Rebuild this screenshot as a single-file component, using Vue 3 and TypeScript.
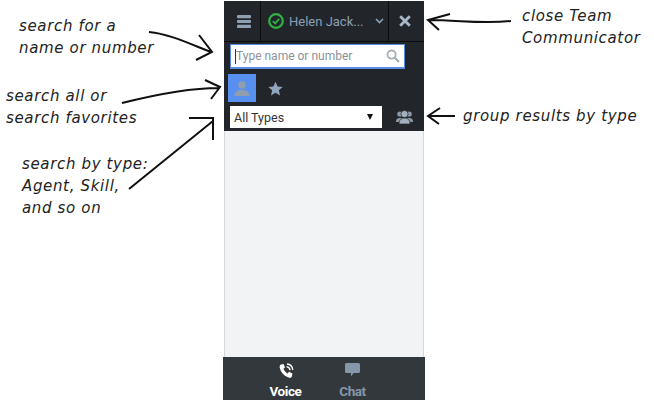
<script setup lang="ts">
// callouts around the Team Communicator panel
const notes = [
  { text: 'search for a\nname or number', x: 19, y: 15 },
  { text: 'search all or\nsearch favorites', x: 6, y: 85 },
  { text: 'search by type:\nAgent, Skill,\nand so on', x: 22, y: 153 },
  { text: 'close Team\nCommunicator', x: 522, y: 5 },
  { text: 'group results by type', x: 463, y: 105 },
]

const arrows = [
  'M149 32C170 34 190 44 211 52M196 60L212 52L199 35',
  'M122 103C150 96 185 88 219 88M205 80L220 87L211 99',
  'M129 189L213 121M189 118L213 118L213 140',
  'M511 21C480 24 460 20 428 20M450 14L428 20L439 30',
  'M455 116H428M440 108L428 116L439 124',
]
</script>

<template>
  <div class="page">
    <div class="panel">
      <header class="topbar">
        <button class="menu-btn">
          <svg width="14" height="13" viewBox="0 0 14 13">
            <rect y="0" width="14" height="3.2" rx="1" />
            <rect y="4.9" width="14" height="3.2" rx="1" />
            <rect y="9.8" width="14" height="3.2" rx="1" />
          </svg>
        </button>
        <div class="agent">
          <svg width="16" height="16" viewBox="0 0 16 16" class="status">
            <circle cx="8" cy="8" r="6.8" fill="none" stroke="#2fb344" stroke-width="2.2" />
            <path d="M4.8 8.2L7.2 10.4L11.2 5.8" fill="none" stroke="#2fb344" stroke-width="1.8" />
          </svg>
          <span class="agent-name">Helen Jack...</span>
          <svg width="9" height="6" viewBox="0 0 9 6" class="caret">
            <path d="M1 1L4.5 4.5L8 1" fill="none" stroke="#8aa0b8" stroke-width="1.6" />
          </svg>
        </div>
        <button class="close-btn">
          <svg width="12" height="12" viewBox="0 0 12 12">
            <path d="M1.2 1.2L10.8 10.8M10.8 1.2L1.2 10.8" stroke="#a9b8c8" stroke-width="2.8" />
          </svg>
        </button>
      </header>

      <div class="filters">
        <div class="search">
          <span class="cursor"></span>
          <span class="placeholder">Type name or number</span>
          <svg width="14" height="14" viewBox="0 0 14 14">
            <circle cx="5.6" cy="5.6" r="4.1" fill="none" stroke="#a6aeb6" stroke-width="1.8" />
            <path d="M8.6 8.6L13 13" stroke="#a6aeb6" stroke-width="2.2" />
          </svg>
        </div>

        <div class="scope">
          <div class="tile">
            <svg width="16" height="16" viewBox="0 0 16 16">
              <circle cx="8" cy="5" r="3.8" fill="#8f9dae" />
              <path d="M0.5 16C0.5 11.5 4 10 8 10C12 10 15.5 11.5 15.5 16Z" fill="#8f9dae" />
            </svg>
          </div>
          <svg class="star" width="15" height="15" viewBox="0 0 24 24">
            <path d="M12 1L15.4 8.6L23.5 9.4L17.4 14.9L19.2 23L12 18.8L4.8 23L6.6 14.9L0.5 9.4L8.6 8.6Z" fill="#8fa4bd" />
          </svg>
        </div>

        <div class="type-row">
          <div class="type-select">
            <span>All Types</span>
            <span class="arrow"></span>
          </div>
          <svg width="17" height="14" viewBox="0 0 17 14" class="group-icon">
            <circle cx="3.8" cy="4" r="2.6" fill="#8b98a6" />
            <circle cx="13.2" cy="4" r="2.6" fill="#8b98a6" />
            <path d="M0 12C0 8.5 2 8 4 8H13C15 8 17 8.5 17 12Z" fill="#8b98a6" />
            <circle cx="8.5" cy="4" r="3.6" fill="#a3afbc" stroke="#22262b" stroke-width=".7" />
            <path d="M3 14C3 9.5 5.5 8.2 8.5 8.2C11.5 8.2 14 9.5 14 14Z" fill="#a3afbc" stroke="#22262b" stroke-width=".7" />
          </svg>
        </div>
      </div>

      <main class="results"></main>

      <nav class="tabs">
        <div class="tab active">
          <svg width="16" height="16" viewBox="0 0 16 16">
            <path d="M3 1.5L5.6 1L7 4.4L5.4 5.8C6 7.6 7.6 9.4 9.6 10.4L11 8.8L14.4 10.4L14 13C13.8 14.4 12.6 15 11.2 14.7C6.6 13.6 2.6 9.4 1.7 4.6C1.4 3 2 2 3 1.5Z" fill="#fff" />
            <path d="M8.5 3.6C10.4 3.8 11.8 5.2 12 7.2M9 1C12 1.2 14.4 3.6 14.8 6.8" fill="none" stroke="#fff" stroke-width="1.4" />
          </svg>
          <span>Voice</span>
        </div>
        <div class="tab">
          <svg width="15" height="16" viewBox="0 0 15 16">
            <path d="M1.5 0H13.5A1.5 1.5 0 0 1 15 1.5V8.5A1.5 1.5 0 0 1 13.5 10H8.5L6 13.4V10H1.5A1.5 1.5 0 0 1 0 8.5V1.5A1.5 1.5 0 0 1 1.5 0Z" fill="#8598ab" />
          </svg>
          <span>Chat</span>
        </div>
      </nav>
    </div>

    <p v-for="n in notes" :key="n.text" class="note" :style="{ left: n.x + 'px', top: n.y + 'px' }">{{ n.text }}</p>

    <svg class="arrows" width="654" height="400" viewBox="0 0 654 400">
      <path v-for="d in arrows" :key="d" :d="d" fill="none" stroke="#111" stroke-width="2" />
    </svg>
  </div>
</template>

<style scoped>
.page {
  position: relative;
  width: 654px;
  height: 400px;
  overflow: hidden;
  background: #fff;
  font-family: Roboto, "Liberation Sans", sans-serif;
}

.panel {
  width: 202px;
  height: 400px;
  margin-left: 223px;
  display: flex;
  flex-direction: column;
}

.topbar {
  height: 40px;
  margin: 1px 1px 0;
  display: flex;
  background: #22262b;
  border-bottom: 1px solid #0b0c0e;
}

.menu-btn,
.close-btn {
  padding: 0;
  border: none;
  background: none;
  display: flex;
  align-items: center;
  justify-content: center;
}

.menu-btn {
  width: 37px;
  padding-left: 4px;
  border-right: 1px solid #0b0c0e;
}

.menu-btn svg {
  fill: #8e9fb2;
}

.close-btn {
  flex: 1;
  padding-right: 4px;
  border-left: 1px solid #0b0c0e;
}

.agent {
  width: 127px;
  display: flex;
  align-items: center;
  padding-left: 7px;
  box-sizing: border-box;
}

.status {
  flex: none;
}

.agent-name {
  margin-left: 5px;
  font-size: 13px;
  color: #8c9fb3;
  white-space: nowrap;
}

.caret {
  margin-left: auto;
  margin-right: 4px;
}

.filters {
  height: 89px;
  margin: 0 1px;
  padding: 2px 0 0 6px;
  box-sizing: border-box;
  background: #22262b;
}

.search {
  width: 175px;
  height: 25px;
  box-sizing: border-box;
  padding: 0 4px;
  display: flex;
  align-items: center;
  background: #fff;
  border: 1px solid #5a8de0;
  border-width: 1px 1px 2px;
}

.cursor {
  width: 1px;
  height: 15px;
  background: #333;
}

.placeholder {
  flex: 1;
  font-size: 12px;
  color: #8b929a;
}

.scope {
  margin: 5px 0 0 -2px;
  display: flex;
  align-items: center;
}

.tile {
  width: 28px;
  height: 28px;
  background: #5890f0;
  display: flex;
  align-items: center;
  justify-content: center;
}

.star {
  margin-left: 12px;
}

.type-row {
  margin-top: 4px;
  display: flex;
  align-items: center;
}

.type-select {
  width: 152px;
  height: 22px;
  box-sizing: border-box;
  padding: 0 9px 0 4px;
  display: flex;
  align-items: center;
  justify-content: space-between;
  background: #fff;
  font-size: 12.5px;
  color: #333;
}

.arrow {
  width: 0;
  height: 0;
  border-left: 3px solid transparent;
  border-right: 3px solid transparent;
  border-top: 6px solid #111;
}

.group-icon {
  margin-left: 14px;
}

.results {
  flex: 1;
  margin: 0 1px;
  background: #f2f3f5;
  border-left: 1px solid #d5d7da;
  border-right: 1px solid #d5d7da;
}

.tabs {
  height: 43px;
  display: flex;
  background: #33383c;
  padding-left: 29px;
}

.tab {
  width: 67px;
  display: flex;
  flex-direction: column;
  align-items: center;
  padding-top: 6px;
  box-sizing: border-box;
  gap: 4px;
  font-size: 13.5px;
  font-weight: 700;
  letter-spacing: -0.4px;
  color: #8598ab;
}

.tab.active {
  color: #fff;
}

.note {
  position: absolute;
  margin: 0;
  white-space: pre-line;
  font-family: "DejaVu Sans", sans-serif;
  font-size: 15px;
  font-style: italic;
  letter-spacing: 0.65px;
  line-height: 22px;
  color: #222;
}

.arrows {
  position: absolute;
  left: 0;
  top: 0;
  pointer-events: none;
}
</style>
